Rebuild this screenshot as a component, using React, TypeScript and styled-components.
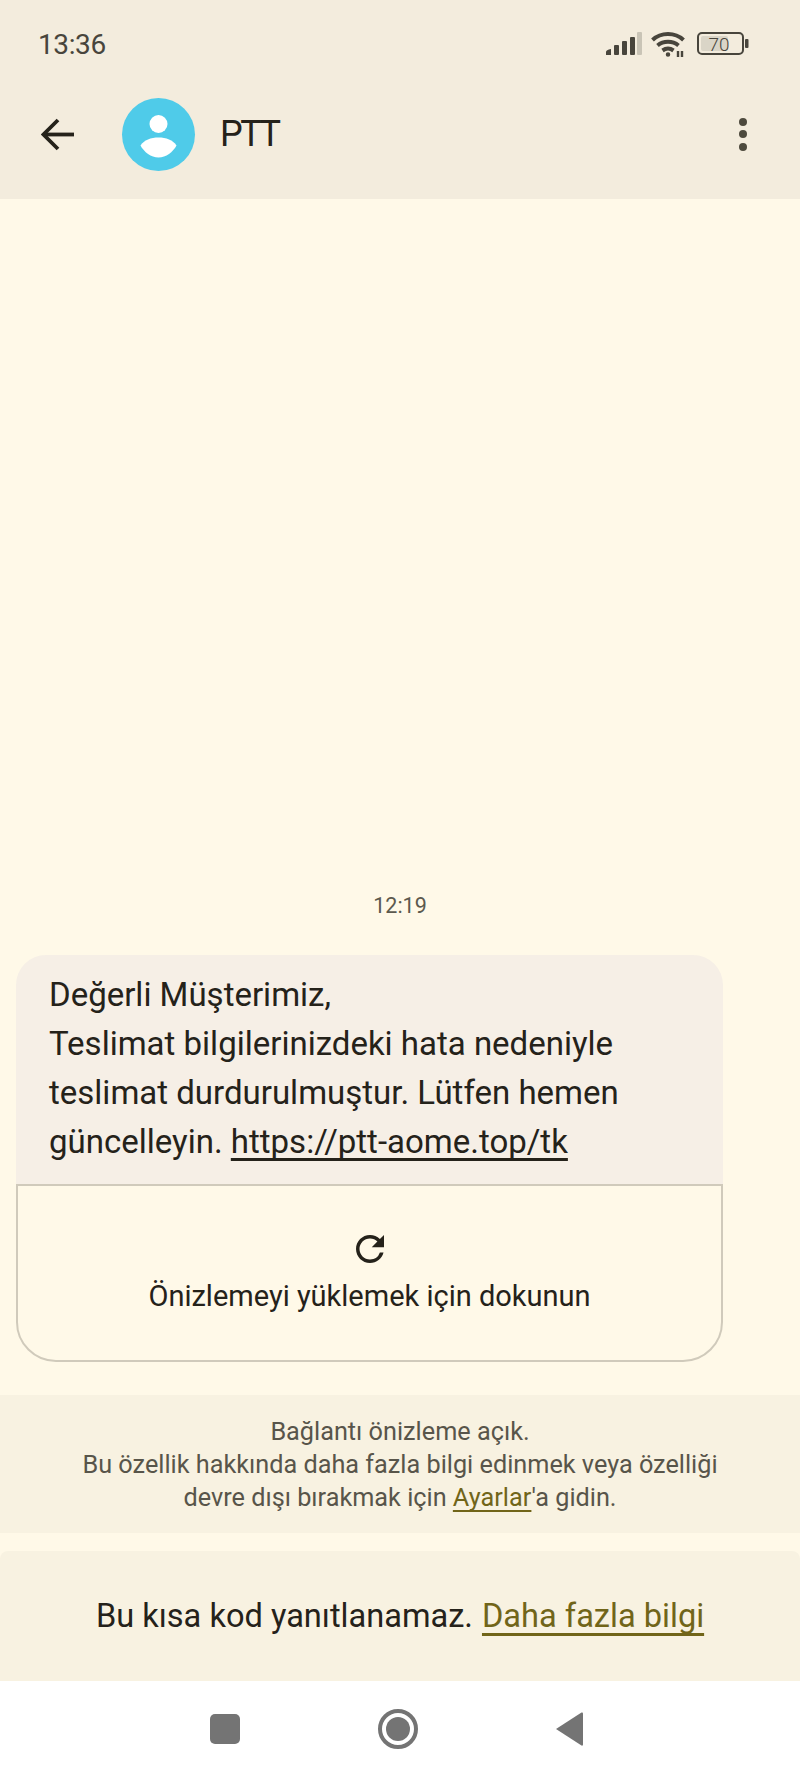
import React from 'react';
import styled, { createGlobalStyle } from 'styled-components';
import { MdRefresh } from 'react-icons/md';

const GlobalStyle = createGlobalStyle`
  html, body {
    margin: 0;
    padding: 0;
    background: #fff9e8;
  }
  * {
    box-sizing: border-box;
  }
`;

const Screen = styled.div`
  width: 800px;
  height: 1777px;
  display: flex;
  flex-direction: column;
  background: #fff9e8;
  font-family: Roboto, "Noto Sans", sans-serif;
  color: #25221a;
`;

const TopArea = styled.header`
  height: 199px;
  flex-shrink: 0;
  display: flex;
  flex-direction: column;
  background: #f3ecdd;
`;

const StatusBar = styled.div`
  height: 88px;
  display: flex;
  align-items: center;
  justify-content: space-between;
  padding: 0 51px 0 38px;
`;

const Clock = styled.span`
  font-size: 28px;
  letter-spacing: -0.4px;
  color: #48453c;
`;

const StatusIcons = styled.div`
  display: flex;
  align-items: center;
  gap: 9px;
`;

const Toolbar = styled.div`
  height: 92px;
  display: flex;
  align-items: center;
  padding: 0 53px 0 41px;
`;

const BackButton = styled.button`
  width: 33px;
  height: 33px;
  margin-right: 48px;
  padding: 0;
  border: 0;
  background: none;
  display: flex;
`;

const Avatar = styled.div`
  width: 73px;
  height: 73px;
  margin-right: 25px;
  border-radius: 50%;
  background: #4fcbe9;
  display: flex;
  align-items: center;
  justify-content: center;
`;

const ContactName = styled.h1`
  flex: 1;
  margin: 0;
  font-size: 36px;
  font-weight: 400;
  letter-spacing: -2.5px;
  color: #25221a;
`;

const MoreDots = styled.div`
  display: flex;
  flex-direction: column;
  gap: 4.5px;
`;

const Dot = styled.span`
  width: 8px;
  height: 8px;
  border-radius: 50%;
  background: #4d4a3d;
`;

const Conversation = styled.main`
  flex: 1;
  display: flex;
  flex-direction: column;
  justify-content: flex-end;
  padding: 0 77px 33px 16px;
`;

const TimeStamp = styled.div`
  align-self: center;
  margin: 0 -61px 37px 0;
  font-size: 21.5px;
  color: #5c594e;
`;

const Bubble = styled.div`
  padding: 15px 33px 18px;
  border-radius: 30px 30px 0 0;
  background: #f6efe6;
  font-size: 33px;
  line-height: 49px;
  color: #25221a;
`;

const MessageLink = styled.a`
  color: inherit;
  text-decoration: underline;
  text-decoration-thickness: 3px;
  text-decoration-skip-ink: none;
  text-underline-offset: 5px;
`;

const PreviewCard = styled.div`
  height: 178px;
  display: flex;
  flex-direction: column;
  align-items: center;
  padding-top: 42px;
  border: 2px solid #d0cabb;
  border-radius: 0 0 40px 40px;
  font-size: 29px;
  color: #25221a;
`;

const RefreshIcon = styled(MdRefresh)`
  width: 42px;
  height: 42px;
  margin-bottom: 9px;
`;

const Notice = styled.div`
  flex-shrink: 0;
  height: 138px;
  margin-bottom: 18px;
  display: flex;
  flex-direction: column;
  align-items: center;
  justify-content: center;
  background: #f8f2e1;
  font-size: 25.25px;
  line-height: 33px;
  text-align: center;
  color: #58554a;
`;

const NoticeLink = styled.a`
  color: #716519;
  text-decoration: underline;
  text-decoration-thickness: 2px;
  text-decoration-skip-ink: none;
  text-underline-offset: 4px;
`;

const ReplyBanner = styled.div`
  flex-shrink: 0;
  height: 130px;
  display: flex;
  align-items: center;
  justify-content: center;
  gap: 9px;
  border-radius: 8px 8px 0 0;
  background: #f8f2e1;
  font-size: 32.6px;
  color: #25221a;
`;

const BannerLink = styled.a`
  color: #716519;
  text-decoration: underline;
  text-decoration-thickness: 3px;
  text-decoration-skip-ink: none;
  text-underline-offset: 6px;
`;

const NavBar = styled.nav`
  flex-shrink: 0;
  height: 96px;
  display: flex;
  align-items: center;
  justify-content: center;
  gap: 138px;
  padding-right: 7px;
  background: #fff;
`;

const RecentsKey = styled.span`
  width: 30px;
  height: 30px;
  border-radius: 5px;
  background: #747474;
`;

const HomeKey = styled.span`
  width: 40px;
  height: 40px;
  border: 4px solid #747474;
  border-radius: 50%;
  display: flex;
  align-items: center;
  justify-content: center;
  &::after {
    content: '';
    width: 24px;
    height: 24px;
    border-radius: 50%;
    background: #747474;
  }
`;

const SignalIcon = () => (
  <svg width="36" height="24" viewBox="0 0 36 24">
    <path d="M0 23v-3q0-2 5-3v6z" fill="#48453c" />
    <rect x="8" y="13" width="5" height="10" rx="1" fill="#48453c" />
    <rect x="16" y="9" width="5" height="14" rx="1" fill="#48453c" />
    <rect x="24" y="5" width="5" height="18" rx="1" fill="#48453c" />
    <rect x="31" y="0" width="5" height="23" rx="1" fill="#c9c4b6" />
  </svg>
);

const WifiIcon = () => (
  <svg width="37" height="26" viewBox="0 0 37 26" fill="none" stroke="#48453c" strokeWidth="4">
    <path d="M1.500 9C10 1 24 1 32.500 9" />
    <path d="M6.500 14.500c6-5 15-5 21 0" />
    <path d="M11.500 19.500c3.500-2.500 7.500-2.500 11 0" />
    <circle cx="17" cy="23.500" r="1.500" fill="#48453c" strokeWidth="1.500" />
    <path d="M27 20v6M31 20v6" strokeWidth="2.400" />
  </svg>
);

const BatteryIcon = () => (
  <svg width="52" height="24" viewBox="0 0 52 24">
    <rect x="1" y="1" width="45" height="21" rx="4" fill="none" stroke="#48453c" strokeWidth="2" />
    <rect x="4" y="4" width="27" height="15" rx="2" fill="#dad5c7" />
    <rect x="48" y="7" width="3.500" height="9" rx="1" fill="#48453c" />
    <text x="22" y="18.500" fontSize="19" fontWeight="300" textAnchor="middle" fill="#48453c" fontFamily="Roboto, sans-serif">70</text>
  </svg>
);

const BackArrow = () => (
  <svg width="33" height="33" viewBox="0 0 33 33" fill="none" stroke="#25221a" strokeWidth="3.800">
    <path d="M33 16.500H3" />
    <path d="M17 2 2.500 16.500 17 31" />
  </svg>
);

const PersonIcon = () => (
  <svg width="73" height="73" viewBox="0 0 73 73" fill="#fff">
    <circle cx="36.500" cy="26" r="9" />
    <path d="M18.500 47.500C22 42 29 39.500 36.500 39.500S51 42 54.500 47.500C51 54 44 59.500 36.500 59.500S22 54 18.500 47.500z" />
  </svg>
);

const BackKey = () => (
  <svg width="27" height="34" viewBox="0 0 27 34">
    <path d="M0 17 25.500 0.500q1.500-.5 1.500 1v31q0 1.500-1.500 1z" fill="#747474" />
  </svg>
);

const App: React.FC = () => {
  return (
    <Screen>
      <GlobalStyle />
      <TopArea>
        <StatusBar>
          <Clock>13:36</Clock>
          <StatusIcons>
            <SignalIcon />
            <WifiIcon />
            <BatteryIcon />
          </StatusIcons>
        </StatusBar>
        <Toolbar>
          <BackButton aria-label="Geri">
            <BackArrow />
          </BackButton>
          <Avatar>
            <PersonIcon />
          </Avatar>
          <ContactName>PTT</ContactName>
          <MoreDots>
            <Dot />
            <Dot />
            <Dot />
          </MoreDots>
        </Toolbar>
      </TopArea>
      <Conversation>
        <TimeStamp>12:19</TimeStamp>
        <Bubble>
          Değerli Müşterimiz,
          <br />
          Teslimat bilgilerinizdeki hata nedeniyle
          <br />
          teslimat durdurulmuştur. Lütfen hemen
          <br />
          güncelleyin. <MessageLink>https://ptt-aome.top/tk</MessageLink>
        </Bubble>
        <PreviewCard>
          <RefreshIcon />
          Önizlemeyi yüklemek için dokunun
        </PreviewCard>
      </Conversation>
      <Notice>
        Bağlantı önizleme açık.
        <br />
        Bu özellik hakkında daha fazla bilgi edinmek veya özelliği
        <br />
        <span>
          devre dışı bırakmak için <NoticeLink>Ayarlar</NoticeLink>'a gidin.
        </span>
      </Notice>
      <ReplyBanner>
        Bu kısa kod yanıtlanamaz. <BannerLink>Daha fazla bilgi</BannerLink>
      </ReplyBanner>
      <NavBar>
        <RecentsKey />
        <HomeKey />
        <BackKey />
      </NavBar>
    </Screen>
  );
};

export default App;
